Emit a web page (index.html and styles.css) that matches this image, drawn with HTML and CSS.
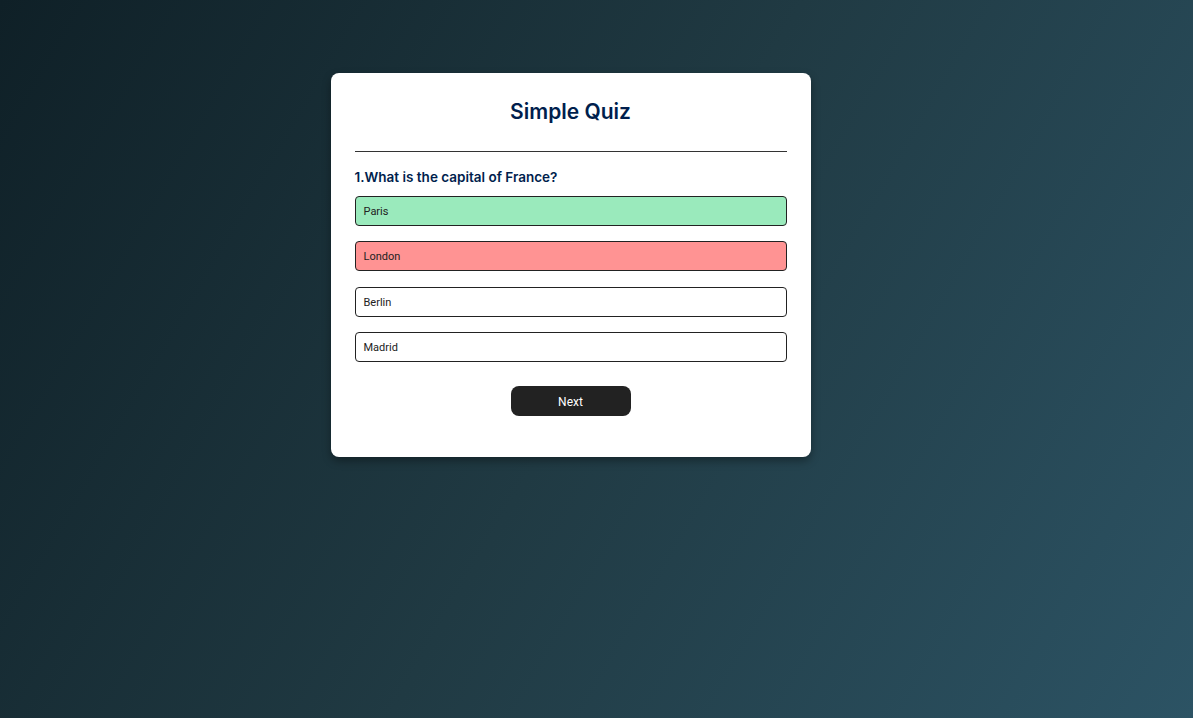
FILE: index.html
```html
<!DOCTYPE html>
<html lang="en">
<head>
<meta charset="UTF-8">
<title>Simple Quiz</title>
<link rel="stylesheet" href="styles.css">
</head>
<body>
<div class="app">
  <h1 class="title">Simple Quiz</h1>
  <div class="quiz">
    <h2 class="question">1.What is the capital of France?</h2>
    <div class="answers">
      <button class="btn correct">Paris</button>
      <button class="btn incorrect">London</button>
      <button class="btn">Berlin</button>
      <button class="btn">Madrid</button>
    </div>
    <button class="next">Next</button>
  </div>
</div>
</body>
</html>
```

FILE: styles.css
```css
* { box-sizing: border-box; margin: 0; padding: 0; }
html, body { height: 100%; }
body {
  background: linear-gradient(120deg, #0f2027 0%, #203a43 50%, #2c5364 100%);
  font-family: "Inter", "Liberation Sans", sans-serif;
  overflow: hidden;
}
.app {
  width: 480px;
  margin: 73px 0 0 calc(50% - 266px);
  background: #fff;
  border-radius: 8px;
  padding: 25px 24px 41px;
  box-shadow: 0 4px 8px rgba(0,0,0,0.35);
}
.title {
  font-size: 21px;
  line-height: 28px;
  font-weight: 600;
  color: #001e4d;
  text-align: center;
  border-bottom: 1px solid #333;
  padding-bottom: 25px;
}
.quiz { padding-top: 15px; }
.question {
  font-size: 13.5px;
  line-height: 20px;
  font-weight: 600;
  color: #001e4d;
}
.answers {
  display: flex;
  flex-direction: column;
  gap: 15px;
  margin-top: 9px;
}
.answers .btn:nth-child(3) { margin-top: 1px; }
.btn {
  display: block;
  width: 100%;
  height: 30px;
  background: #fff;
  color: #222;
  border: 1px solid #222;
  border-radius: 4px;
  text-align: left;
  padding: 0 8px;
  font-family: "Roboto", "Liberation Sans", sans-serif;
  font-size: 11px;
}
.correct { background: #9aeabc; }
.incorrect { background: #ff9393; }
.next {
  display: block;
  width: 120px;
  height: 30px;
  margin: 24px auto 0;
  padding-top: 2px;
  background: #222;
  color: #fff;
  border: none;
  border-radius: 8px;
  font-family: "Roboto", "Liberation Sans", sans-serif;
  font-size: 12px;
}
```
